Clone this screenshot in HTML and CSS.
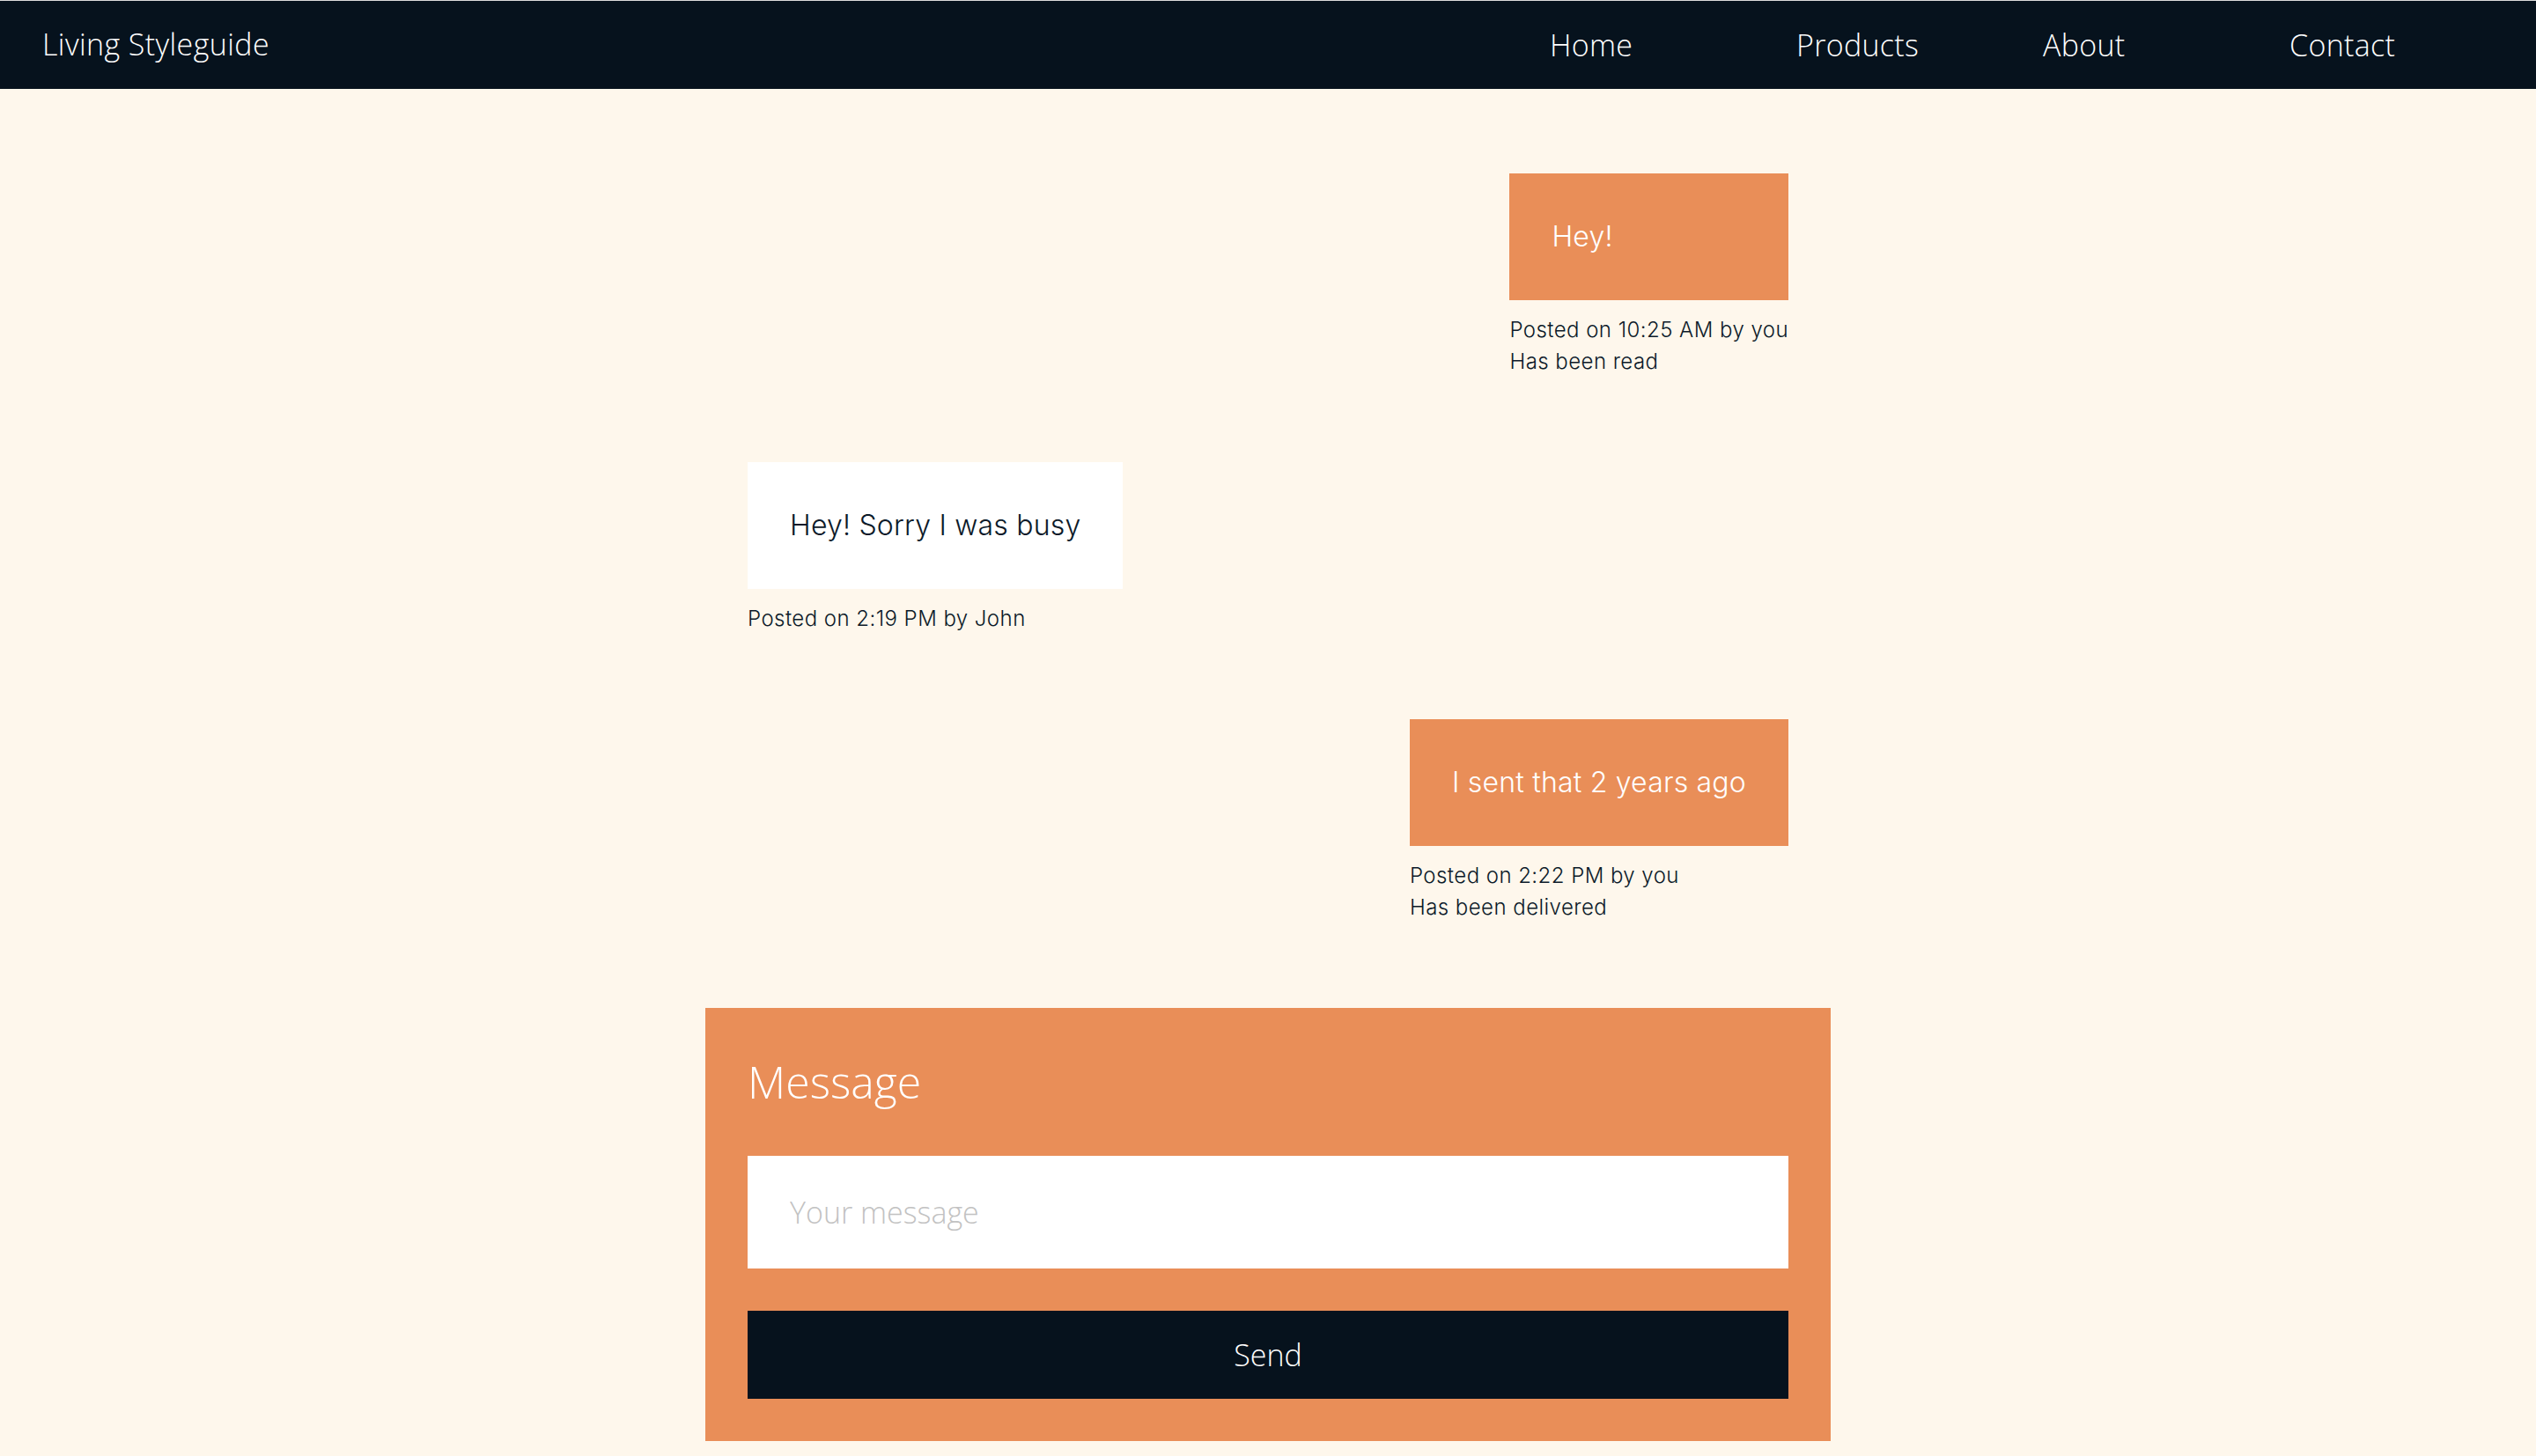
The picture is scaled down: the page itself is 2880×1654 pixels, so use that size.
FILE: index.html
```html
<!DOCTYPE html>
<html lang="en">
<head>
<meta charset="utf-8">
<title>Living Styleguide</title>
<link rel="stylesheet" href="styles.css">
</head>
<body>
<header class="navbar">
  <a class="brand" href="#">Living Styleguide</a>
  <ul class="nav">
    <li><a href="#">Home</a></li>
    <li><a href="#">Products</a></li>
    <li><a href="#">About</a></li>
    <li><a href="#">Contact</a></li>
  </ul>
</header>
<main class="chat">
  <div class="msg own">
    <div class="msg-body">
      <div class="bubble">Hey!</div>
      <div class="meta">Posted on 10:25 AM by you<br>Has been read</div>
    </div>
  </div>
  <div class="msg">
    <div class="msg-body">
      <div class="bubble">Hey! Sorry I was busy</div>
      <div class="meta">Posted on 2:19 PM by John</div>
    </div>
  </div>
  <div class="msg own">
    <div class="msg-body">
      <div class="bubble">I sent that 2 years ago</div>
      <div class="meta">Posted on 2:22 PM by you<br>Has been delivered</div>
    </div>
  </div>
  <form class="composer">
    <h2 class="composer-title">Message</h2>
    <input class="composer-input" type="text" placeholder="Your message">
    <button class="composer-send" type="button">Send</button>
  </form>
</main>
</body>
</html>
```
FILE: styles.css
```css
* { box-sizing: border-box; }
html, body { margin: 0; padding: 0; }
body {
  background: #fef7ec;
  color: #0c1a29;
  font-family: "Open Sans", "Liberation Sans", sans-serif;
}
.navbar {
  display: flex;
  align-items: center;
  justify-content: space-between;
  height: 101px;
  border-top: 1px solid #dcdcdc;
  background: #06121d;
  padding-left: 48px;
}
.brand {
  color: #fff;
  text-decoration: none;
  font-size: 34px;
  letter-spacing: 0.4px;
  font-weight: 300;
  margin-top: -2px;
}
.nav {
  display: flex;
  list-style: none;
  margin: 0;
  padding: 0;
}
.nav li { width: 280px; }
.nav a {
  color: #fff;
  text-decoration: none;
  font-size: 34px;
  letter-spacing: 0.3px;
  font-weight: 300;
}
.chat {
  width: 1278px;
  margin: 0 auto;
  padding-top: 96px;
}
.msg {
  display: flex;
  justify-content: flex-start;
  padding: 0 48px;
  margin-bottom: 96px;
}
.msg.own { justify-content: flex-end; }
.msg-body {
  display: flex;
  flex-direction: column;
}
.bubble {
  background: #fff;
  padding: 48px;
  font-family: Inter, "Noto Sans", sans-serif;
  font-weight: 300;
  font-size: 32px;
  letter-spacing: 0.2px;
  line-height: 48px;
  color: #0c1a29;
  white-space: nowrap;
}
.msg.own .bubble {
  background: #e98e58;
  color: #fff;
}
.meta {
  margin-top: 16px;
  font-family: Inter, "Noto Sans", sans-serif;
  font-weight: 300;
  font-size: 24px;
  letter-spacing: 0.45px;
  line-height: 36px;
  white-space: nowrap;
}
.composer {
  background: #e98e58;
  padding: 48px;
  display: flex;
  flex-direction: column;
}
.composer-title {
  margin: 0 0 48px;
  color: #fff;
  font-size: 50px;
  line-height: 72px;
  font-weight: 300;
}
.composer-input {
  height: 128px;
  border: none;
  outline: none;
  background: #fff;
  padding: 0 48px;
  font-family: "Open Sans", sans-serif;
  font-size: 34px;
  font-weight: 300;
  color: #0c1a29;
}
.composer-input::placeholder { color: #c2c2c2; }
.composer-send {
  margin-top: 48px;
  height: 100px;
  border: none;
  background: #06121d;
  color: #fff;
  font-family: "Open Sans", sans-serif;
  font-size: 34px;
  font-weight: 300;
  cursor: pointer;
}
```
